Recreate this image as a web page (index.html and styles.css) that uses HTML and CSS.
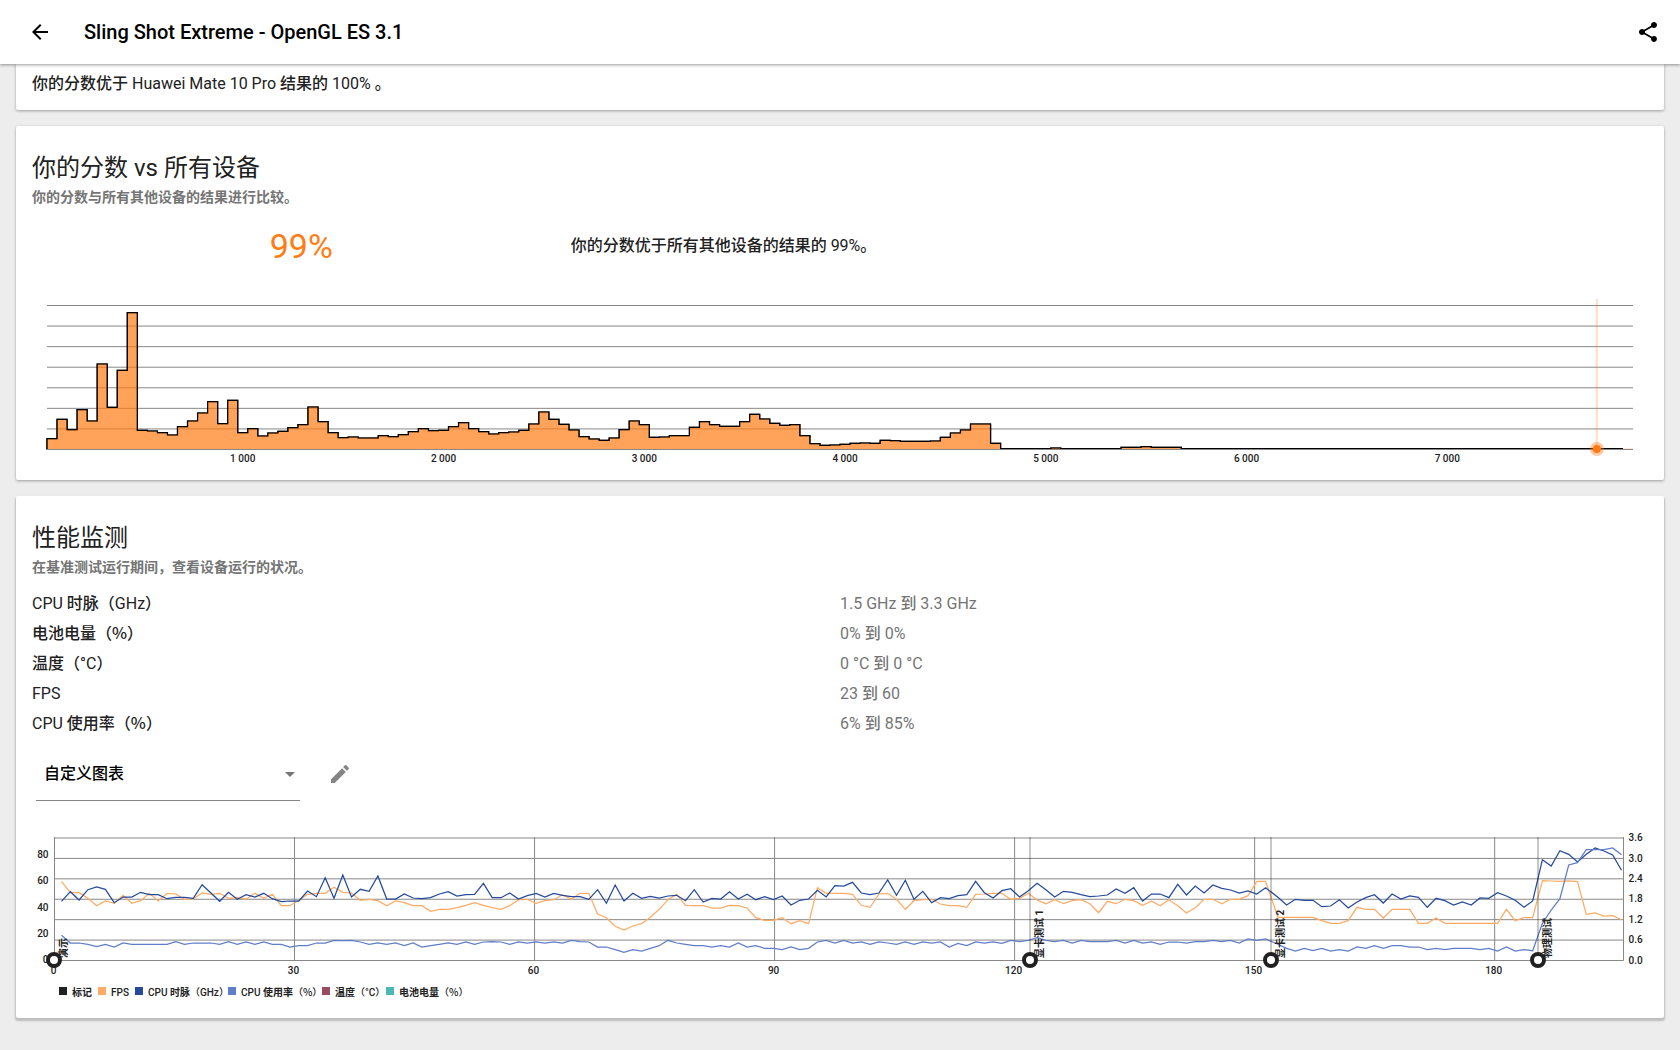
FILE: index.html
```html
<!DOCTYPE html>
<html lang="zh-CN">
<head>
<meta charset="utf-8">
<meta name="viewport" content="width=device-width, initial-scale=1">
<title>Sling Shot Extreme - OpenGL ES 3.1</title>
<link rel="stylesheet" href="styles.css">
</head>
<body>
<header class="app-bar">
  <button class="icon-button" type="button" aria-label="返回">
    <svg viewBox="0 0 24 24" width="24" height="24" aria-hidden="true"><path d="M20 11H7.83l5.59-5.59L12 4l-8 8 8 8 1.41-1.41L7.83 13H20v-2z"/></svg>
  </button>
  <h1 class="app-title">Sling Shot Extreme - OpenGL ES 3.1</h1>
  <button class="icon-button" type="button" aria-label="分享">
    <svg viewBox="0 0 24 24" width="24" height="24" aria-hidden="true"><path d="M18 16.08c-.76 0-1.44.3-1.96.77L8.91 12.7c.05-.23.09-.46.09-.7s-.04-.47-.09-.7l7.05-4.11c.54.5 1.25.81 2.04.81 1.66 0 3-1.34 3-3s-1.34-3-3-3-3 1.34-3 3c0 .24.04.47.09.7L8.04 9.81C7.5 9.31 6.79 9 6 9c-1.66 0-3 1.34-3 3s1.34 3 3 3c.79 0 1.5-.31 2.04-.81l7.12 4.16c-.05.21-.08.43-.08.65 0 1.61 1.31 2.92 2.92 2.92s2.92-1.31 2.92-2.92-1.31-2.92-2.92-2.92z"/></svg>
  </button>
</header>

<main class="content">
  <section class="card card-continued">
    <p class="body-text">你的分数优于 Huawei Mate 10 Pro 结果的 100% 。</p>
  </section>

  <section class="card">
    <h2 class="card-title">你的分数 vs 所有设备</h2>
    <p class="card-subtitle">你的分数与所有其他设备的结果进行比较。</p>
    <div class="score">
      <strong class="score-value">99%</strong>
      <p class="body-text">你的分数优于所有其他设备的结果的 99%。</p>
    </div>
    <svg class="histogram" id="histogram" role="img" aria-label="所有设备的分数分布"></svg>
  </section>

  <section class="card">
    <h2 class="card-title">性能监测</h2>
    <p class="card-subtitle">在基准测试运行期间，查看设备运行的状况。</p>
    <table class="stats">
      <tr><th scope="row">CPU 时脉（GHz）</th><td>1.5 GHz 到 3.3 GHz</td></tr>
      <tr><th scope="row">电池电量<span class="cjk">（%）</span></th><td>0% 到 0%</td></tr>
      <tr><th scope="row">温度（°C）</th><td>0 °C 到 0 °C</td></tr>
      <tr><th scope="row">FPS</th><td>23 到 60</td></tr>
      <tr><th scope="row">CPU 使用率<span class="cjk">（%）</span></th><td>6% 到 85%</td></tr>
    </table>
    <div class="chart-picker">
      <div class="select-wrap">
        <select class="select" aria-label="图表">
          <option>自定义图表</option>
        </select>
      </div>
      <button class="icon-button icon-muted" type="button" aria-label="编辑图表">
        <svg viewBox="0 0 24 24" width="24" height="24" aria-hidden="true"><path d="M3 17.25V21h3.75L17.81 9.94l-3.75-3.75L3 17.25zM20.71 7.04c.39-.39.39-1.02 0-1.41l-2.34-2.34c-.39-.39-1.02-.39-1.41 0l-1.83 1.83 3.75 3.75 1.83-1.83z"/></svg>
      </button>
    </div>
    <svg class="monitor" id="monitor" role="img" aria-label="性能监测图表"></svg>
  </section>
</main>
<script src="charts.js"></script>
</body>
</html>
```
FILE: styles.css
```css
* {
  box-sizing: border-box;
}

body {
  margin: 0;
  background: #ededed;
  color: #212121;
  font-family: Roboto, "Noto Sans CJK SC Medium", "Noto Sans CJK SC", sans-serif;
  font-size: 16px;
  line-height: 24px;
}

h1,
h2,
p {
  margin: 0;
}

svg {
  display: block;
}

.cjk {
  font-family: "Noto Sans CJK SC Medium", "Noto Sans CJK SC", sans-serif;
  line-height: 1;
}

.app-bar {
  position: sticky;
  top: 0;
  z-index: 1;
  display: flex;
  align-items: center;
  gap: 32px;
  height: 64px;
  padding: 0 20px 0 28px;
  background: #fff;
  color: #000;
  box-shadow: 0 1px 3px rgba(0, 0, 0, 0.4);
}

.app-title {
  flex: 1;
  font-size: 20px;
  font-weight: 500;
}

.icon-button {
  width: 24px;
  height: 24px;
  padding: 0;
  border: 0;
  background: none;
  color: inherit;
  cursor: pointer;
}

.icon-button svg {
  fill: currentColor;
}

.icon-muted {
  color: #858585;
}

.content {
  display: flex;
  flex-direction: column;
  gap: 16px;
  padding: 0 16px 32px;
}

.card {
  padding: 24px 16px 16px;
  border-radius: 2px;
  background: #fff;
  box-shadow: 0 1px 3px rgba(0, 0, 0, 0.35);
}

.card:last-child {
  box-shadow: 0 2px 2px 1px rgba(0, 0, 0, 0.2);
}

.card-continued {
  padding: 8px 16px 14px;
  border-radius: 0 0 2px 2px;
}

.card-title {
  font-family: Roboto, "Noto Sans CJK SC", sans-serif;
  font-size: 24px;
  font-weight: 400;
  line-height: 36px;
}

.card-subtitle {
  padding-bottom: 2px;
  color: #757575;
  font-family: Roboto, "Noto Sans CJK SC", sans-serif;
  font-size: 14px;
  font-weight: 700;
  line-height: 22px;
}

.score {
  display: grid;
  grid-template-columns: 1fr 2fr;
  align-items: center;
  height: 72px;
  margin-bottom: 8px;
}

.score-value {
  color: #ff7d14;
  font-size: 34px;
  font-weight: 400;
  text-align: center;
}

.stats {
  width: 100%;
  margin-top: 9px;
  border-collapse: collapse;
  table-layout: fixed;
}

.stats th,
.stats td {
  height: 30px;
  padding: 0;
  font-weight: 400;
  line-height: 24px;
  text-align: left;
}

.stats td {
  color: #757575;
}

.chart-picker {
  display: flex;
  align-items: flex-start;
  gap: 28px;
  margin: 9px 4px 19px;
}

.chart-picker .icon-button {
  margin-top: 14px;
}

.select-wrap {
  position: relative;
  width: 264px;
}

.select-wrap::after {
  content: "";
  position: absolute;
  top: 24px;
  right: 5px;
  border: 5px solid transparent;
  border-top-color: #757575;
  border-bottom: 0;
  pointer-events: none;
}

.select {
  display: block;
  width: 100%;
  height: 53px;
  padding: 0 24px 0 8px;
  border: 0;
  border-bottom: 1px solid #858585;
  border-radius: 0;
  appearance: none;
  background: none;
  color: #000;
  font: inherit;
  font-weight: 500;
}

.histogram,
.monitor {
  width: 100%;
  fill: #212121;
  font-size: 10px;
  font-weight: 500;
}

.histogram {
  height: 174px;
}

.monitor {
  height: 182px;
}

.grid {
  fill: none;
  stroke: #888;
}

.area {
  fill: #ff7a14;
  fill-opacity: 0.7;
}

.outline {
  fill: none;
  stroke: #000;
  stroke-width: 1.2;
}

.your-score {
  fill: #ff7a14;
}

.your-score .halo {
  fill-opacity: 0.4;
}

.your-score .stem {
  fill-opacity: 0.25;
}

.event line {
  stroke: #212121;
  stroke-opacity: 0.25;
  stroke-width: 2;
}

.event circle {
  fill: #fff;
  stroke: #212121;
  stroke-width: 4;
}

.event text {
  font-family: Roboto, "Noto Sans CJK SC", sans-serif;
  font-weight: 700;
}

.legend-han {
  font-family: "Noto Sans CJK SC", sans-serif;
  font-weight: 700;
}

.series {
  fill: none;
  stroke-width: 1.25;
}
```
FILE: charts.js
```js
const NS = 'http://www.w3.org/2000/svg';

function add(parent, name, attrs, text) {
  const node = document.createElementNS(NS, name);
  for (const key in attrs) node.setAttribute(key, attrs[key]);
  if (text !== undefined) node.textContent = text;
  parent.appendChild(node);
  return node;
}

/* Sample levels are depths below the top of a drawing, three units to a pixel. */
const UNIT = 3;

/* One entry per 50 points of score. */
const bins = [
  446, 388, 419, 359, 393, 222, 352, 241, 68, 421, 423, 428, 435, 410, 393, 369, 335, 401, 331, 428,
  416, 438, 429, 424, 413, 404, 351, 395, 428, 443, 441, 444, 444, 437, 440, 434, 425, 416, 422, 421,
  410, 398, 416, 425, 432, 428, 426, 421, 402, 366, 388, 403, 420, 440, 447, 451, 444, 419, 393, 404,
  442, 441, 437, 437, 412, 395, 404, 409, 409, 395, 373, 387, 400, 406, 404, 437, 461, 466, 465, 463,
  460, 459, 460, 451, 452, 454, 454, 454, 453, 442, 429, 420, 402, 402, 460, 476, 476, 476, 476, 476,
  474, 476, 476, 476, 476, 476, 476, 472, 472, 470, 472, 472, 472
];
while (bins.length < 157) bins.push(476);

function drawHistogram() {
  const svg = document.getElementById('histogram');
  svg.replaceChildren();
  const left = 15;
  const right = svg.clientWidth - 15;
  const top = 15.5;
  const base = 159.5;
  const bin = (right - left) / 158;

  let grid = '';
  for (let i = 0; i < 8; i++) grid += `M${left} ${top + (base - top) / 7 * i}H${right}`;
  add(svg, 'path', { class: 'grid', d: grid });

  let outline = `M${left} ${base}`;
  bins.forEach((level, i) => {
    outline += `V${level / UNIT}H${left + bin * (i + 1)}`;
  });
  add(svg, 'path', { class: 'outline', d: outline });
  add(svg, 'path', { class: 'area', d: `${outline}H${right}V${base}Z` });
  add(svg, 'path', { class: 'outline', d: outline.slice(0, outline.lastIndexOf('V474')) });
  add(svg, 'path', { class: 'grid', d: `M${left} ${base}H${right}` });

  for (let k = 1; k < 8; k++) {
    add(svg, 'text', { x: left + bin * (k * 20 - 0.5), y: 172, 'text-anchor': 'middle' }, `${k} 000`);
  }

  const x = left + bin * 154.4;
  const mark = add(svg, 'g', { class: 'your-score' });
  add(mark, 'rect', { class: 'stem', x: x - 1, y: 9, width: 2, height: 150 });
  add(mark, 'circle', { class: 'halo', cx: x, cy: 159, r: 7 });
  add(mark, 'circle', { cx: x, cy: 159, r: 4 });
}

/* Each benchmark part restarts the sampling clock. */
const parts = [
  { start: 0.875, count: 138 },
  { start: 152.9, count: 30 },
  { start: 185.96, count: 10 }
];
const STEP = 1.0985;

const fps = [
  184, 218, 218, 235, 257, 243, 250, 226, 250, 242, 220, 243, 220, 222, 238, 237, 219, 223, 220, 235,
  233, 237, 220, 235, 223, 257, 257, 241, 223, 220, 220, 202, 217, 219, 241, 238, 242, 257, 243, 248,
  257, 257, 274, 268, 268, 263, 256, 248, 256, 263, 268, 257, 239, 238, 250, 242, 239, 224, 238, 220,
  220, 282, 293, 319, 330, 318, 311, 292, 268, 239, 223, 256, 257, 257, 264, 264, 256, 257, 264, 293,
  301, 301, 293, 311, 302, 311, 203, 220, 220, 220, 223, 256, 262, 222, 220, 238, 268, 242, 239, 238,
  252, 257, 257, 262, 223, 222, 220, 220, 238, 235, 220, 240, 251, 239, 251, 242, 239, 251, 278, 244,
  251, 238, 242, 256, 244, 257, 239, 257, 279, 263, 238, 238, 251, 238, 238, 227, 184, 184,
  292, 292, 292, 292, 292, 302, 310, 310, 302, 262, 268, 268, 294, 268, 268, 268, 310, 310, 294, 310,
  310, 310, 310, 310, 310, 310, 268, 302, 293, 293,
  182, 183, 184, 183, 185, 283, 279, 288, 287, 299
];

const clock = [
  244, 215, 240, 209, 201, 208, 248, 231, 231, 217, 224, 224, 236, 232, 232, 235, 194, 219, 244, 217,
  238, 224, 231, 220, 236, 245, 243, 243, 213, 230, 173, 235, 165, 231, 208, 214, 168, 237, 237, 222,
  234, 236, 233, 222, 215, 228, 224, 223, 190, 233, 233, 219, 237, 227, 220, 231, 220, 226, 230, 230,
  238, 209, 250, 195, 243, 220, 235, 229, 234, 228, 226, 242, 209, 246, 235, 237, 215, 237, 223, 239,
  230, 239, 228, 255, 241, 237, 211, 231, 197, 198, 187, 219, 224, 219, 180, 226, 181, 238, 214, 248,
  233, 236, 227, 224, 184, 218, 234, 212, 206, 231, 212, 190, 209, 231, 214, 217, 224, 230, 228, 225,
  207, 220, 203, 243, 222, 222, 233, 193, 225, 198, 219, 195, 205, 210, 219, 213, 222, 203,
  232, 255, 238, 241, 241, 260, 258, 239, 264, 246, 233, 224, 249, 222, 237, 228, 232, 262, 235, 242,
  255, 246, 255, 234, 235, 218, 228, 241, 262, 243,
  119, 138, 92, 103, 126, 103, 84, 93, 105, 151
];

const usage = [
  346, 369, 369, 373, 380, 373, 381, 369, 373, 373, 373, 373, 373, 365, 373, 369, 369, 369, 373, 365,
  373, 366, 373, 366, 373, 373, 381, 377, 377, 369, 369, 361, 362, 361, 366, 373, 369, 373, 369, 377,
  369, 381, 377, 373, 369, 373, 366, 373, 366, 365, 366, 373, 366, 369, 366, 369, 366, 369, 361, 365,
  366, 381, 381, 389, 397, 389, 393, 385, 377, 361, 369, 373, 377, 377, 381, 377, 381, 369, 381, 377,
  385, 385, 389, 381, 389, 385, 366, 361, 369, 361, 369, 366, 373, 366, 369, 373, 366, 373, 366, 369,
  366, 381, 370, 377, 366, 369, 366, 370, 361, 365, 361, 353, 361, 365, 361, 369, 361, 365, 365, 365,
  361, 369, 361, 369, 366, 373, 366, 366, 369, 365, 365, 361, 365, 361, 369, 357, 361, 357,
  373, 385, 393, 385, 392, 385, 393, 389, 393, 381, 385, 377, 385, 377, 377, 381, 381, 389, 385, 389,
  385, 385, 385, 389, 385, 393, 381, 393, 389, 392,
  310, 270, 236, 135, 128, 89, 89, 89, 84, 104
];

const events = [
  { time: 0, label: '演示' },
  { time: 122, label: '显卡测试 1' },
  { time: 152.1, label: '显卡测试 2' },
  { time: 185.5, label: '物理测试' }
];

const legend = [
  { x: 27, color: '#212121', han: '标记' },
  { x: 66, color: '#ffab66', latin: 'FPS' },
  { x: 103, color: '#264a9b', latin: 'CPU ', han: '时脉', unit: '（GHz）' },
  { x: 196, color: '#5f7dc8', latin: 'CPU ', han: '使用率', percent: '（%）' },
  { x: 290, color: '#9c4a60', han: '温度', unit: '（°C）' },
  { x: 354, color: '#4bb8b8', han: '电池电量', percent: '（%）' }
];

function drawMonitor() {
  const svg = document.getElementById('monitor');
  svg.replaceChildren();
  const left = 22.5;
  const right = svg.clientWidth - 24.5;
  const top = 18;
  const base = 140.5;
  const at = time => left + (right - left) * time / 196.1;

  let grid = '';
  for (let i = 0; i < 7; i++) grid += `M${left} ${top + (base - top) / 6 * i}H${right}`;
  for (let t = 0; t <= 180; t += 30) grid += `M${at(t)} ${top - 1}V${base}`;
  grid += `M${right} ${top - 1}V${base}`;
  add(svg, 'path', { class: 'grid', d: grid });

  for (let v = 0; v <= 80; v += 20) {
    add(svg, 'text', { x: left - 6, y: 143 - v * 1.31, 'text-anchor': 'end' }, v);
  }
  for (let i = 0; i < 7; i++) {
    add(svg, 'text', { x: right + 5, y: 143.5 - i * 20.4 }, (i * 0.6).toFixed(1));
  }
  for (let t = 0; t <= 180; t += 30) {
    add(svg, 'text', { x: at(t) - 1, y: 154, 'text-anchor': 'middle' }, t);
  }

  const times = parts.flatMap(part => Array.from({ length: part.count }, (_, i) => part.start + i * STEP));
  const plot = (levels, color) => add(svg, 'polyline', {
    class: 'series',
    stroke: color,
    points: levels.map((level, i) => `${at(times[i]).toFixed(1)},${(level / UNIT).toFixed(1)}`).join(' ')
  });
  plot(fps, '#ffab66');
  plot(clock, '#264a9b');
  plot(usage, '#5f7dc8');

  events.forEach(event => {
    const x = Math.floor(at(event.time));
    const mark = add(svg, 'g', { class: 'event' });
    if (event.time) add(mark, 'line', { x1: x, x2: x, y1: top - 1, y2: base });
    add(mark, 'circle', { cx: x, cy: 140, r: 6 });
    add(mark, 'text', { transform: `translate(${x + 13} 138) rotate(-90)` }, event.label);
  });

  legend.forEach(item => {
    add(svg, 'rect', { x: item.x, y: 167, width: 8, height: 8, fill: item.color });
    const text = add(svg, 'text', { x: item.x + 13, y: 176 }, item.latin || '');
    if (item.han) add(text, 'tspan', { class: 'legend-han' }, item.han);
    if (item.unit) add(text, 'tspan', {}, item.unit);
    if (item.percent) add(text, 'tspan', { class: 'cjk' }, item.percent);
  });
}

function draw() {
  drawHistogram();
  drawMonitor();
}

window.addEventListener('resize', draw);
draw();
```
